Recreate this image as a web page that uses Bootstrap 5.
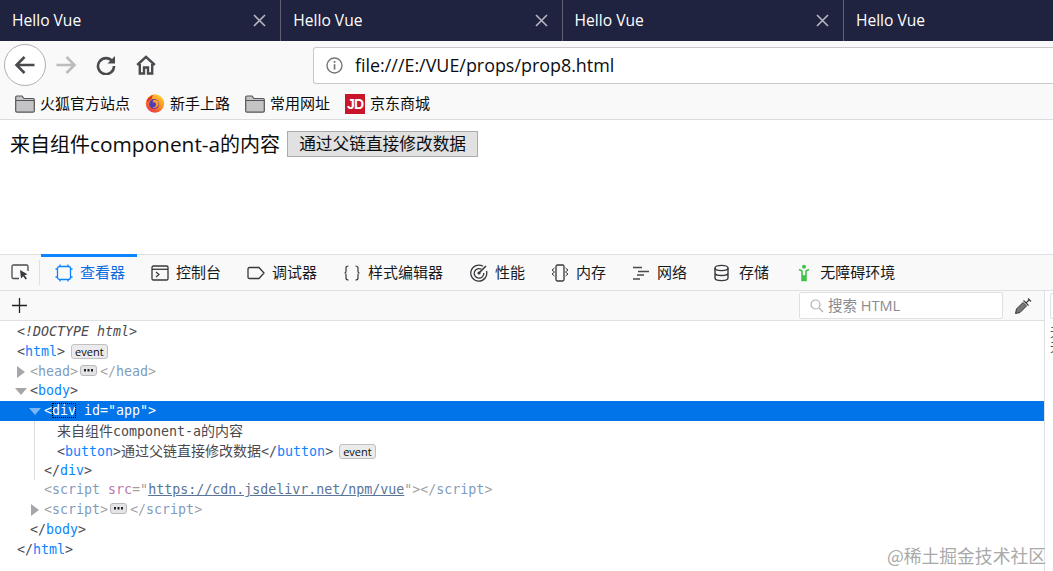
<!DOCTYPE html>
<html lang="zh">
<head>
<meta charset="utf-8">
<title>Hello Vue</title>
<link href="https://cdn.jsdelivr.net/npm/bootstrap@5.3.0/dist/css/bootstrap.min.css" rel="stylesheet">
<style>
html,body{margin:0;padding:0;background:#fff}
body{width:1053px;height:571px;overflow:hidden;position:relative;font-family:"Open Sans","Noto Sans CJK SC",sans-serif;color:#0c0c0d}
svg{display:block;flex:none}
.tab-strip{height:41px;background:#202340;color:#fff;font-size:15.6px}
.tab-item{width:281.3px;height:41px;padding:0 14px 0 12px;border-right:1px solid #5e6074}
.tab-item:last-child{border-right:0;flex:1}
.nav-strip{height:47px;background:#f9f9fa}
.back-btn{width:42px;height:42px;margin-left:4px;border:1px solid #b1b1b3;border-radius:50%;background:#fff}
.tool-slot{width:40px}
.url-box{margin-left:147px;flex:1;height:37px;margin-top:1px;background:#fff;border:1px solid #c8c8c9;border-right:0;border-radius:3px 0 0 3px;padding-left:12px;font-size:17.9px;gap:12px}
.mark-strip{height:32px;background:#f9f9fa;border-bottom:1px solid #dcdcde;padding-left:15px;font-size:15px}
.mark-item{margin-right:15px;gap:5px}
.jd-logo{width:20px;height:20px;background:#c9142b;color:#fff;font:700 14px/20px "Liberation Sans",sans-serif;text-align:center;letter-spacing:-1px}
.page-view{height:134px;padding:11px 10px 0;font-size:20px;line-height:26px}
.latin-part{font-size:20.85px}
.page-btn{margin-left:7px;width:191px;height:26px;padding:0;border:1px solid #ababab;background:#e1e1e1;color:#0c0c0d;font-size:16.7px;line-height:22px;vertical-align:top}
.dev-tabs{height:37px;background:#f9f9fa;border-top:1px solid #e0e0e2;border-bottom:1px solid #e0e0e2;font-size:15px;color:#18191a}
.pick-slot{width:41px;height:100%;padding-left:11px;padding-bottom:1px}
.pick-rule{width:1px;height:25px;background:#e0e0e2;margin-left:10px}
.dev-tab{padding:0 12px 2px 14px;gap:7px;border-top:3px solid transparent;margin-top:-1px;height:36px}
.dev-tab.is-on{border-top-color:#0a84ff;color:#0a6ce0}
.tab-wide{padding-left:15px}
.icon-box{width:18px;height:18px}
.dev-body{height:280px}
.left-pane{width:1045px;border-right:1px solid #e0e0e2}
.search-strip{height:30px;background:#f9f9fa;border-bottom:1px solid #e0e0e2;padding-left:11px}
.search-field{margin-left:auto;width:204px;height:27px;background:#fff;border:1px solid #e0e0e2;border-radius:2px;padding-left:10px;gap:4px;font-size:14.5px;color:#8a8a8f}
.dropper{margin:0 12px 0 11px}
.tree-area{padding-top:1px;font:13.3px/19.8px "DejaVu Sans Mono","Noto Sans CJK SC",monospace;color:#4a4a4f;white-space:nowrap}
.tree-row{height:19.8px;position:relative}
.lv0{padding-left:17px}.lv1{padding-left:30px}.lv2{padding-left:44px}.lv3{padding-left:22px}
.guide-close{padding-left:9px}
.guide-wrap{margin-left:34px;border-left:1px solid #dcdcde}
.tw{position:absolute;width:0;height:0}
.tw-r{border-top:6px solid transparent;border-bottom:6px solid transparent;border-left:8px solid #a6a6a8;top:4px}
.tw-d{border-left:6px solid transparent;border-right:6px solid transparent;border-top:7px solid #a6a6a8;top:7px}
.tw-head{left:17px}.tw-body{left:15px}.tw-div{left:29px}.tw-script{left:31px}
.tn{color:#0a84ff}
.dim{color:rgba(74,74,79,.55)}
.dim .tn{color:#7f9cc0}
.dtp{font-style:italic}
.cjk{font-size:14px;font-family:"Noto Sans CJK SC",sans-serif}
.ev-tag{display:inline-block;height:15px;padding:0 3px;margin-left:6px;font:11px/13px "Open Sans",sans-serif;color:#0c0c0d;background:#ebebed;border:1px solid #c0c0c2;border-radius:3px;vertical-align:0}
.more-tag{display:inline-block;width:17px;height:11px;background:#e4e4e6;border:1px solid #b9b9bb;border-radius:3px;margin:0 3px 0 2px;vertical-align:0;position:relative}
.more-tag svg{position:absolute;left:3px;top:3px}
.is-picked{background:#0074e8;color:#fff}
.is-picked .tw-d{border-top-color:#7ab6f5}
.is-picked .tn{color:#fff}
.focus-box{outline:1px dotted #000;outline-offset:-1px}
.tree-link{text-decoration:underline;color:#5a7598}
.attr-n{color:#b87ab0}
.right-pane{width:8px;overflow:hidden;font-size:12px;line-height:15px;padding:0 0 0 5px;white-space:nowrap}
.side-stub{height:26px;margin:2px 0 5px;border:1px solid #e0e0e2;border-right:0;border-radius:2px;width:10px}
.side-line{font-family:"Noto Sans CJK SC",sans-serif;color:#555}
.water-mark{position:absolute;right:7px;bottom:4px;font-size:17.8px;line-height:24px;color:#a9a9a9;font-family:"Noto Sans CJK SC",sans-serif}
</style>
</head>
<body>

<div class="tab-strip d-flex">
  <div class="tab-item d-flex align-items-center justify-content-between"><span>Hello Vue</span><svg width="13" height="13" viewBox="0 0 13 13"><path d="M1 1L12 12M12 1L1 12" stroke="#b6b7c1" stroke-width="1.600"/></svg></div>
  <div class="tab-item d-flex align-items-center justify-content-between"><span>Hello Vue</span><svg width="13" height="13" viewBox="0 0 13 13"><path d="M1 1L12 12M12 1L1 12" stroke="#b6b7c1" stroke-width="1.600"/></svg></div>
  <div class="tab-item d-flex align-items-center justify-content-between"><span>Hello Vue</span><svg width="13" height="13" viewBox="0 0 13 13"><path d="M1 1L12 12M12 1L1 12" stroke="#b6b7c1" stroke-width="1.600"/></svg></div>
  <div class="tab-item d-flex align-items-center"><span>Hello Vue</span></div>
</div>

<div class="nav-strip d-flex align-items-center">
  <div class="back-btn d-flex align-items-center justify-content-center">
    <svg width="22" height="20" viewBox="0 0 22 20"><path d="M20.500 10H2.500M10.500 2L2.500 10L10.500 18" fill="none" stroke="#4a4a4f" stroke-width="2.600"/></svg>
  </div>
  <div class="tool-slot d-flex justify-content-center">
    <svg width="22" height="20" viewBox="0 0 22 20"><path d="M1.500 10H19.500M11.500 2L19.500 10L11.500 18" fill="none" stroke="#bcbcbe" stroke-width="2.600"/></svg>
  </div>
  <div class="tool-slot d-flex justify-content-center">
    <svg width="20" height="20" viewBox="0 0 20 20"><path d="M16.500 6.500A8 8 0 1 0 18 11" fill="none" stroke="#4a4a4f" stroke-width="2.600"/><path d="M19 1V8.500H11.500Z" fill="#4a4a4f"/></svg>
  </div>
  <div class="tool-slot d-flex justify-content-center">
    <svg width="20" height="20" viewBox="0 0 20 20"><path d="M1.200 10L10 1.800L18.800 10" fill="none" stroke="#4a4a4f" stroke-width="2.400"/><path d="M3.800 9V18.500H8V12.500H12V18.500H16.200V9" fill="none" stroke="#4a4a4f" stroke-width="2.400"/></svg>
  </div>
  <div class="url-box d-flex align-items-center">
    <svg width="17" height="17" viewBox="0 0 17 17"><circle cx="8.500" cy="8.500" r="7.500" fill="none" stroke="#77777a" stroke-width="1.400"/><rect x="7.700" y="7.200" width="1.700" height="5.400" fill="#77777a"/><rect x="7.700" y="4" width="1.700" height="1.900" fill="#77777a"/></svg>
    <span>file:///E:/VUE/props/prop8.html</span>
  </div>
</div>

<div class="mark-strip d-flex align-items-center">
  <div class="mark-item d-flex align-items-center">
    <svg width="20" height="18" viewBox="0 0 20 18"><path d="M.7 16V2.200Q.7 1 2 1H7L9 3.500H18Q19.300 3.500 19.300 4.800V16Q19.300 17.200 18 17.200H2Q.7 17.200 .7 16Z" fill="#c4c4c6" stroke="#555" stroke-width="1.200"/><path d="M1 5.500H19" stroke="#555" stroke-width="1"/></svg>
    <span>火狐官方站点</span>
  </div>
  <div class="mark-item d-flex align-items-center">
    <svg width="20" height="19" viewBox="0 0 19 19"><defs><linearGradient id="ffx" x1="0.8" y1="0" x2="0.2" y2="1"><stop offset="0" stop-color="#ffd43a"/><stop offset=".5" stop-color="#ff8a1f"/><stop offset="1" stop-color="#e8294b"/></linearGradient></defs><circle cx="9.500" cy="9.500" r="9.200" fill="url(#ffx)"/><circle cx="8.700" cy="10" r="5" fill="#4b3fb5"/><path d="M8 6C12 5 14 8 13 11C12 13.500 9 14.500 6.500 13.500C9 13.500 11 12 10.500 10C10 8.500 8.500 8 7 8.500Z" fill="#ff9a24"/><path d="M1.500 6.500C3 3 5.500 1.500 8 1C6.500 2.500 6 4 6.500 5C4.500 5.500 3 7 2.500 9Z" fill="#e0312d"/></svg>
    <span>新手上路</span>
  </div>
  <div class="mark-item d-flex align-items-center">
    <svg width="20" height="18" viewBox="0 0 20 18"><path d="M.7 16V2.200Q.7 1 2 1H7L9 3.500H18Q19.300 3.500 19.300 4.800V16Q19.300 17.200 18 17.200H2Q.7 17.200 .7 16Z" fill="#c4c4c6" stroke="#555" stroke-width="1.200"/><path d="M1 5.500H19" stroke="#555" stroke-width="1"/></svg>
    <span>常用网址</span>
  </div>
  <div class="mark-item d-flex align-items-center">
    <div class="jd-logo">JD</div>
    <span>京东商城</span>
  </div>
</div>

<div class="page-view">来自组件<span class="latin-part">component-a</span>的内容<button class="page-btn" type="button">通过父链直接修改数据</button></div>

<div class="dev-tabs d-flex align-items-center">
  <div class="pick-slot d-flex align-items-center">
    <svg width="18" height="16" viewBox="0 0 18 16"><path d="M8 14.500H2.500Q1 14.500 1 13V2.500Q1 1 2.500 1H15.500Q17 1 17 2.500V7" fill="none" stroke="#4a4a4f" stroke-width="1.300"/><path d="M9 6L16.500 10.200L13.500 11.300L16 14.500L14.500 15.500L12.200 12.300L10 14.500Z" fill="#38383d"/></svg>
    <div class="pick-rule"></div>
  </div>
  <div class="dev-tab is-on d-flex align-items-center">
    <svg class="icon-box" viewBox="0 0 18 18"><rect x="2.500" y="2.500" width="13" height="13" rx="2" fill="none" stroke="#0a84ff" stroke-width="1.300"/><path d="M5 0.500V2.500M13 0.500V2.500M5 15.500V17.500M13 15.500V17.500M0.500 5H2.500M0.500 13H2.500M15.500 5H17.500M15.500 13H17.500" stroke="#0a84ff" stroke-width="1.300"/></svg>
    <span>查看器</span>
  </div>
  <div class="dev-tab d-flex align-items-center">
    <svg class="icon-box" viewBox="0 0 18 18"><rect x="1" y="2" width="16" height="14" rx="1.300" fill="none" stroke="#38383d" stroke-width="1.300"/><path d="M1 5.300H17" stroke="#38383d" stroke-width="1.300"/><path d="M5 8L8 10.500L5 13" fill="none" stroke="#38383d" stroke-width="1.200"/></svg>
    <span>控制台</span>
  </div>
  <div class="dev-tab d-flex align-items-center">
    <svg class="icon-box" viewBox="0 0 18 18"><path d="M2.500 3.500H12L17 9L12 14.500H2.500Q1 14.500 1 13V5Q1 3.500 2.500 3.500Z" fill="none" stroke="#38383d" stroke-width="1.300"/></svg>
    <span>调试器</span>
  </div>
  <div class="dev-tab d-flex align-items-center">
    <svg class="icon-box" viewBox="0 0 18 18"><path d="M5.500 2Q3 2 3 4V7.500Q3 9 1.500 9Q3 9 3 10.500V14Q3 16 5.500 16M12.500 2Q15 2 15 4V7.500Q15 9 16.500 9Q15 9 15 10.500V14Q15 16 12.500 16" fill="none" stroke="#38383d" stroke-width="1.200"/></svg>
    <span>样式编辑器</span>
  </div>
  <div class="dev-tab tab-wide d-flex align-items-center">
    <svg class="icon-box" viewBox="0 0 18 18"><path d="M13 2.300A8 8 0 1 0 16.500 7" fill="none" stroke="#38383d" stroke-width="1.300"/><path d="M11.500 5.300A4.800 4.800 0 1 0 13.800 9" fill="none" stroke="#38383d" stroke-width="1.300"/><path d="M9 9L16 2" stroke="#38383d" stroke-width="1.600"/><circle cx="9" cy="9" r="1.600" fill="#38383d"/></svg>
    <span>性能</span>
  </div>
  <div class="dev-tab d-flex align-items-center">
    <svg class="icon-box" viewBox="0 0 18 18"><rect x="5" y="1" width="8" height="16" rx="1.500" fill="none" stroke="#38383d" stroke-width="1.300"/><path d="M3.500 4L1 6L3.500 8L1 10L3.500 12M14.500 4L17 6L14.500 8L17 10L14.500 12" fill="none" stroke="#38383d" stroke-width="1"/></svg>
    <span>内存</span>
  </div>
  <div class="dev-tab d-flex align-items-center">
    <svg class="icon-box" viewBox="0 0 18 18"><path d="M1 3.500H10M6 7.500H17M5 11H12M1 15H8" stroke="#4a4a4f" stroke-width="1.300"/></svg>
    <span>网络</span>
  </div>
  <div class="dev-tab tab-wide d-flex align-items-center">
    <svg class="icon-box" viewBox="0 0 18 18"><ellipse cx="7.500" cy="4" rx="6.500" ry="2.600" fill="none" stroke="#38383d" stroke-width="1.400"/><path d="M1 4V14Q1 16.600 7.500 16.600T14 14V4M1 9Q1 11.500 7.500 11.500T14 9" fill="none" stroke="#38383d" stroke-width="1.400"/></svg>
    <span>存储</span>
  </div>
  <div class="dev-tab d-flex align-items-center">
    <svg class="icon-box" viewBox="0 0 18 18"><circle cx="9" cy="2.800" r="2" fill="#3fc24c"/><path d="M4 5.500L7 7V16.500H8.500V12H9.500V16.500H11V7L14 5.500" fill="none" stroke="#3fc24c" stroke-width="1.600"/></svg>
    <span>无障碍环境</span>
  </div>
</div>

<div class="dev-body d-flex">
  <div class="left-pane">
    <div class="search-strip d-flex align-items-center">
      <svg width="17" height="17" viewBox="0 0 17 17"><path d="M8.500 1V16M1 8.500H16" stroke="#222" stroke-width="1.300"/></svg>
      <div class="search-field d-flex align-items-center">
        <svg width="14" height="14" viewBox="0 0 14 14"><circle cx="5.500" cy="5.500" r="4.500" fill="none" stroke="#b1b1b3" stroke-width="1.200"/><path d="M9 9L13 13" stroke="#b1b1b3" stroke-width="1.300"/></svg>
        <span>搜索 HTML</span>
      </div>
      <svg class="dropper" width="18" height="18" viewBox="0 0 18 18"><path d="M1.500 16.500L2.500 12L9 5.500L12.500 9L6 15.500Z" fill="#77777a" stroke="#38383d"/><path d="M9.500 3.500L14.500 8.500M12 6L15 3M14 1.500L17 4.500" fill="none" stroke="#38383d" stroke-width="1.100"/></svg>
    </div>
    <div class="tree-area">
      <div class="tree-row lv0 dtp">&lt;!DOCTYPE html&gt;</div>
      <div class="tree-row lv0">&lt;<span class="tn">html</span>&gt;<span class="ev-tag">event</span></div>
      <div class="tree-row lv1 dim"><i class="tw tw-r tw-head"></i>&lt;<span class="tn">head</span>&gt;<span class="more-tag"><svg width="9" height="3" viewBox="0 0 9 3"><path d="M0 0h2v2.500H0zM3.500 0h2v2.500h-2zM7 0h2v2.500H7z" fill="#222"/></svg></span>&lt;/<span class="tn">head</span>&gt;</div>
      <div class="tree-row lv1"><i class="tw tw-d tw-body"></i>&lt;<span class="tn">body</span>&gt;</div>
      <div class="tree-row lv2 is-picked"><i class="tw tw-d tw-div"></i>&lt;<span class="tn focus-box">div</span> id="app"&gt;</div>
      <div class="guide-wrap">
        <div class="tree-row lv3"><span class="cjk">来自组件</span>component-a<span class="cjk">的内容</span></div>
        <div class="tree-row lv3">&lt;<span class="tn">button</span>&gt;<span class="cjk">通过父链直接修改数据</span>&lt;/<span class="tn">button</span>&gt;<span class="ev-tag">event</span></div>
        <div class="tree-row guide-close">&lt;/<span class="tn">div</span>&gt;</div>
      </div>
      <div class="tree-row lv2 dim">&lt;<span class="tn">script</span> <span class="attr-n">src</span>="<span class="tree-link">https://cdn.jsdelivr.net/npm/vue</span>"&gt;&lt;/<span class="tn">script</span>&gt;</div>
      <div class="tree-row lv2 dim"><i class="tw tw-r tw-script"></i>&lt;<span class="tn">script</span>&gt;<span class="more-tag"><svg width="9" height="3" viewBox="0 0 9 3"><path d="M0 0h2v2.500H0zM3.500 0h2v2.500h-2zM7 0h2v2.500H7z" fill="#222"/></svg></span>&lt;/<span class="tn">script</span>&gt;</div>
      <div class="tree-row lv1">&lt;/<span class="tn">body</span>&gt;</div>
      <div class="tree-row lv0">&lt;/<span class="tn">html</span>&gt;</div>
    </div>
  </div>
  <div class="right-pane">
    <div class="side-stub"></div>
    <div class="side-line">无元素</div>
    <div class="side-line">无元素</div>
  </div>
</div>

<div class="water-mark">@稀土掘金技术社区</div>
</body>
</html>
